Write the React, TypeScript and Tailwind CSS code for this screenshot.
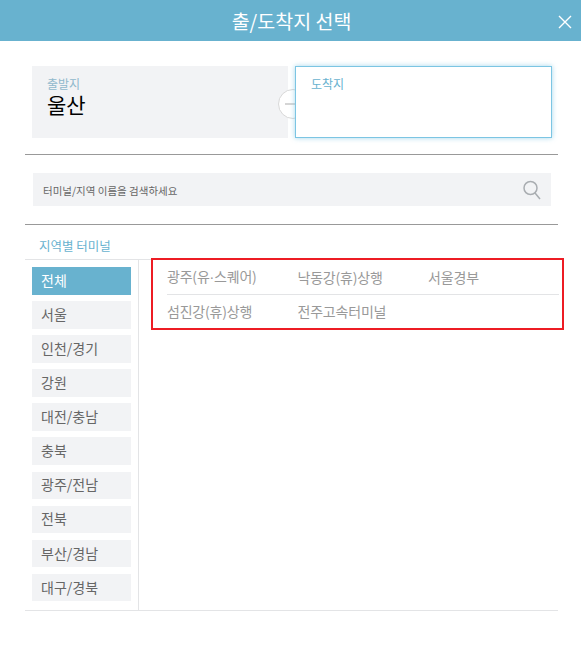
const font = { fontFamily: '"Noto Sans CJK KR", "Noto Sans", sans-serif' };
const regions = ['전체', '서울', '인천/경기', '강원', '대전/충남', '충북', '광주/전남', '전북', '부산/경남', '대구/경북'];
const row2 = ['섬진강(휴)상행', '전주고속터미널'];

export default function App() {
  return (
    <div style={font} className="w-[581px] h-[659px] bg-white overflow-hidden">
      <header className="relative h-[41px] bg-[#68b2cf] flex items-center justify-center text-white text-[19.5px]">
        <span className="ml-[2px]">출/도착지 선택</span>
        <svg className="absolute left-[558px] top-[15px]" width="14" height="14" viewBox="0 0 14 14" fill="none" stroke="white" strokeWidth="1.4">
          <path d="M1 1 L13 13 M13 1 L1 13" />
        </svg>
      </header>

      <div className="ml-[25px] w-[533px]">
        <div className="relative flex pt-[25px] pb-[16px] pl-[7px] border-b border-[#999999]">
          <div className="w-[256px] h-[72px] bg-[#f2f3f5] pl-[15px] pt-[10px]">
            <div className="text-[12px] leading-[16px] text-[#8fb8cc]">출발지</div>
            <div className="text-[21px] leading-[24px] text-black">울산</div>
          </div>
          <div className="absolute left-[253px] top-[48px] w-[30px] h-[30px] rounded-full border border-[#d8d8d8] bg-white flex items-center justify-center">
            <svg width="20" height="12" viewBox="0 0 20 12" fill="none" stroke="#c8c8c8" strokeWidth="1.5" className="ml-[2px]">
              <path d="M1 6 H18 M13 1.5 L18 6 L13 10.5" />
            </svg>
          </div>
          <div className="relative ml-[7px] w-[257px] h-[72px] bg-white border border-[#7cc5e3] shadow-[0_0_5px_rgba(124,197,227,0.7)] pl-[15px] pt-[9px]">
            <div className="text-[12px] leading-[16px] text-[#68b2cf]">도착지</div>
          </div>
        </div>

        <div className="pt-[18px] pb-[18px] pl-[8px] pr-[7px] border-b border-[#999999]">
          <div className="h-[33px] bg-[#f2f3f5] flex items-center justify-between pl-[10px] pr-[10px]">
            <span className="text-[10.5px] text-[#666666] mt-[3px]">터미널/지역 이름을 검색하세요</span>
            <svg width="18" height="20" viewBox="0 0 18 20" fill="none" stroke="#a9adb1" strokeWidth="1.5">
              <circle cx="7.5" cy="8" r="6.5" />
              <path d="M12 13 L17 19" />
            </svg>
          </div>
        </div>

        <div className="h-[35px] pl-[14px] pt-[12px] text-[12.5px] leading-[18px] text-[#68b2cf] border-b border-[#e3e4e6]">지역별 터미널</div>

        <div className="flex h-[351px] border-b border-[#e3e4e6]">
          <nav className="w-[114px] border-r border-[#e3e4e6] pl-[7px] pt-[7px] flex flex-col gap-[6.5px] shrink-0">
            {regions.map((r, i) => (
              <div key={r} className={`w-[99px] h-[27.6px] pl-[9px] pb-[1px] flex items-center text-[14px] shrink-0 ${i === 0 ? 'bg-[#68b2cf] text-white' : 'bg-[#f2f3f5] text-[#666666]'}`}>
                {r}
              </div>
            ))}
          </nav>
          <div className="ml-[12px] mr-[-5px] mt-[-2px] w-[413px] h-[72px] border-2 border-[#ed1c24] pl-[14px] pr-[3px] text-[14px] text-[#999999] shrink-0">
            <div className="flex h-[35px] items-center border-b border-[#e3e4e6]">
              <span className="w-[130.5px] shrink-0 tracking-[-0.2px]">광주(유<span className="font-['Liberation_Sans']">·</span>스퀘어)</span>
              <span className="w-[130.5px] shrink-0 tracking-[-0.2px]">낙동강(휴)상행</span>
              <span className="w-[130.5px] shrink-0 tracking-[-0.1px]">서울경부</span>
            </div>
            <div className="flex h-[33px] items-center">
              {row2.map((t) => (<span key={t} className="w-[130.5px] shrink-0 tracking-[-0.2px]">{t}</span>))}
            </div>
          </div>
        </div>
      </div>
    </div>
  );
}
